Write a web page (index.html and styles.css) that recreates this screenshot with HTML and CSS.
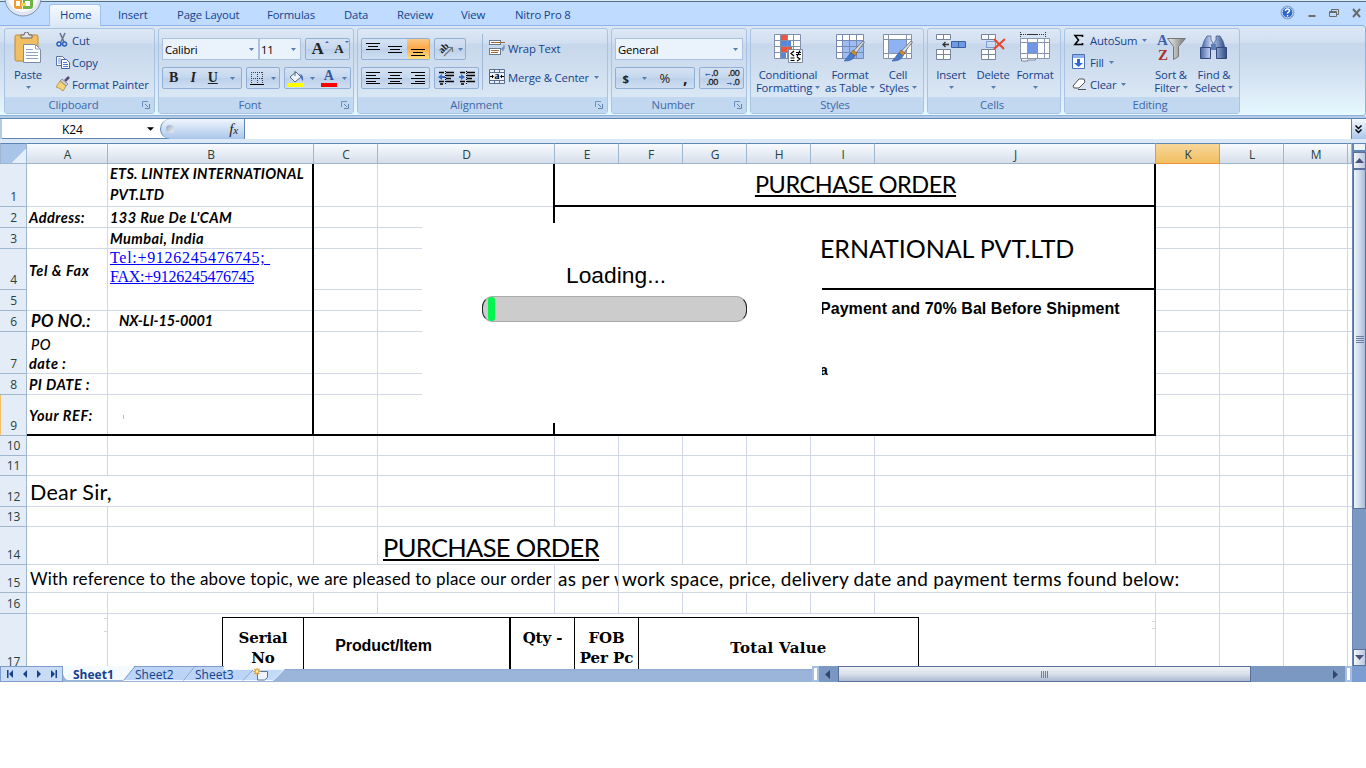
FILE: index.html
```html
<!DOCTYPE html>
<html lang="en">
<head>
<meta charset="utf-8">
<title>Purchase Order</title>
<link rel="stylesheet" href="styles.css">
</head>
<body>
<svg width="0" height="0" class="defs">
  <defs>
    <linearGradient id="gLens" x1="0" y1="0" x2="1" y2="0"><stop offset="0" stop-color="#4a67a5"/><stop offset=".4" stop-color="#c9d9f5"/><stop offset="1" stop-color="#2e4a86"/></linearGradient>
    <linearGradient id="gGrey" x1="0" y1="0" x2="1" y2="0"><stop offset="0" stop-color="#eee"/><stop offset="1" stop-color="#777"/></linearGradient>
    <symbol id="dd" viewBox="0 0 5 3"><path d="M0 0h5L2.500 3z" fill="#567db1"/></symbol>
    <symbol id="launch" viewBox="0 0 8 8"><path d="M.5 6V.5H6" fill="none" stroke="#6f92bd"/><path d="M3 3l3 3M7.500 3v4.500H3" fill="none" stroke="#5f84b3"/></symbol>
    <symbol id="brush" viewBox="0 0 22 22"><path d="M20 1l1.500 1L13 13l-2.500-2z" fill="#ddd" stroke="#666" stroke-width=".8"/><path d="M10 10l4 3-2 3-4-3z" fill="#c98b3c" stroke="#85591f" stroke-width=".6"/><path d="M8 13l4 3c-2 4-6 5-11 5 3-2 4-6 7-8z" fill="#4a7bc8" stroke="#2f5597" stroke-width=".6"/></symbol>
  </defs>
</svg>

<header class="titlebar"></header>
<nav class="tabs">
  <svg class="orb" width="38" height="18" viewBox="0 0 38 18"><circle cx="19" cy="-2" r="18" fill="#dfe6f1" stroke="#7d93b3"/><circle cx="19" cy="-3" r="15" fill="#f7f9fc"/><path d="M10 0h8v9h-5q-3 0-3-3z" fill="#f09a2c"/><path d="M19 0h10v6q0 3-3 3h-7z" fill="#6cb544"/><path d="M12 1h4v5h-4zM21 1h5v5h-5z" fill="#fff"/><path d="M17 3h5v3h-5z" fill="#f7d34c"/></svg>
  <span class="tab tab-active">Home</span>
  <span class="tab tab-insert">Insert</span>
  <span class="tab tab-layout">Page Layout</span>
  <span class="tab tab-formulas">Formulas</span>
  <span class="tab tab-data">Data</span>
  <span class="tab tab-review">Review</span>
  <span class="tab tab-view">View</span>
  <span class="tab tab-nitro">Nitro Pro 8</span>
  <div class="window-icons">
    <svg width="15" height="15" viewBox="0 0 15 15"><circle cx="7.500" cy="7.500" r="6.500" fill="#2e68c8" stroke="#8fa9cf"/><circle cx="7.500" cy="7.500" r="5.400" fill="none" stroke="#dce8fb"/><path d="M5.500 6q0-2 2-2t2 1.800q0 1-1.200 1.500-.8.400-.8 1.500M7.500 10v1.500" fill="none" stroke="#fff" stroke-width="1.500"/></svg>
    <svg width="8" height="15" viewBox="0 0 8 15"><path d="M.5 11h7" stroke="#6b6b6b" stroke-width="2"/></svg>
    <svg width="10" height="15" viewBox="0 0 10 15"><path d="M2.500 6V4.500h7v5H8M.5 6.500h7v5h-7zM.5 7.500h7" fill="none" stroke="#6b6b6b"/></svg>
    <svg width="10" height="15" viewBox="0 0 10 15"><path d="M1 4l7 8M8 4l-7 8" fill="none" stroke="#6b6b6b" stroke-width="2"/></svg>
  </div>
</nav>

<section class="ribbon">
  <div class="group g-clipboard">
    <div class="body">
      <div class="big">
        <svg width="30" height="32" viewBox="0 0 30 32"><rect x="2" y="3" width="23" height="26" rx="1.500" fill="#f1bf62" stroke="#b98a3d"/><path d="M8 6h11V3h-3q0-3-2.500-3T11 3H8z" fill="#e4e4e4" stroke="#666"/><path d="M10.500 12.500h12l5 5v13h-17z" fill="#fff" stroke="#7e8ea8"/><path d="M22.500 12v5h5M13 17.500h7M13 20.500h12M13 23.500h12M13 26.500h12" fill="none" stroke="#8fa1c0"/></svg>
        <span class="lbl">Paste</span><svg class="dd"><use href="#dd"/></svg>
      </div>
      <div class="list">
        <div><svg width="16" height="16" viewBox="0 0 16 16"><path d="M4 1l4 9M9 1L5 10" stroke="#69788f" stroke-width="1.600" fill="none"/><circle cx="3" cy="12" r="2" fill="none" stroke="#2d5fb8" stroke-width="1.500"/><circle cx="8.500" cy="12" r="2" fill="none" stroke="#2d5fb8" stroke-width="1.500"/></svg><span class="lbl">Cut</span></div>
        <div><svg width="16" height="16" viewBox="0 0 16 16"><path d="M.5 2.500h6l3 3v6h-9z" fill="#fff" stroke="#5875a8"/><path d="M2 5h3M2 7h4M2 9h4" stroke="#6a92d8"/><path d="M5.500 5.500h5l3 3v6h-8z" fill="#fff" stroke="#3f62a8"/><path d="M7 8.500h4M7 10.500h5M7 12.500h5" stroke="#4a7bd0"/></svg><span class="lbl">Copy</span></div>
        <div><svg width="16" height="16" viewBox="0 0 16 16"><path d="M13 1l-4 4" stroke="#5a4a78" stroke-width="2.500"/><path d="M6 3l6 5-2 2-6-5z" fill="#c9cdd8" stroke="#777" stroke-width=".7"/><path d="M4 5l6 5-3 5q-3-3-7-4z" fill="#f3d27a" stroke="#a6802f" stroke-width=".7"/></svg><span class="lbl">Format Painter</span></div>
      </div>
    </div>
    <div class="caption"><span>Clipboard</span><svg width="8" height="8"><use href="#launch"/></svg></div>
  </div>

  <div class="group g-font">
    <div class="body rows">
      <div class="row">
        <div class="combo c-font"><span>Calibri</span><svg class="dd"><use href="#dd"/></svg></div><div class="combo c-size"><span>11</span><svg class="dd"><use href="#dd"/></svg></div>
        <div class="btns b-grow"><b class="serif s18">A<i class="up"></i></b><b class="serif s14">A<i class="down"></i></b></div>
      </div>
      <div class="row">
        <div class="btns b-biu"><b class="serif">B</b><b class="serif it">I</b><b class="serif un">U</b><svg class="dd"><use href="#dd"/></svg></div>
        <div class="btns b-border"><svg width="15" height="15" viewBox="0 0 15 15"><path d="M1 1.500h12M1 7.500h12M1.500 1v12M7.500 1v12M12.500 1v12" stroke="#444" stroke-dasharray="1 1" fill="none"/><path d="M0 13.500h14" stroke="#000"/></svg><svg class="dd"><use href="#dd"/></svg></div>
        <div class="btns b-fill"><svg width="17" height="17" viewBox="0 0 17 17"><path d="M2 7l6-5 5 5-6 5z" fill="#eef3fb" stroke="#54688c"/><path d="M7 1v5" stroke="#54688c"/><path d="M11 4q5 0 4 7-2-1-2-5z" fill="#3f6fc0"/><path d="M0 13h16v4H0z" fill="#ff0"/></svg><svg class="dd"><use href="#dd"/></svg><b class="serif fcol">A</b><svg class="dd"><use href="#dd"/></svg></div>
      </div>
    </div>
    <div class="caption"><span>Font</span><svg width="8" height="8"><use href="#launch"/></svg></div>
  </div>

  <div class="group g-align">
    <div class="body">
      <div class="rows align-left">
        <div class="row">
          <div class="btns b-three"><span><svg width="14" height="14"><path d="M0 1.500h14M2 4.500h10M0 7.500h14" stroke="#000"/></svg></span><span><svg width="14" height="14"><path d="M0 4.500h14M2 7.500h10M0 10.500h14" stroke="#000"/></svg></span><span class="hot"><svg width="14" height="14"><path d="M0 7.500h14M2 10.500h10M0 13.500h14" stroke="#000"/></svg></span></div>
          <div class="btns b-orient"><svg width="17" height="17" viewBox="0 0 17 17"><path d="M7 15l8-8M11 6.500h4.500V11" stroke="#777" stroke-width="1.200" fill="none"/><text x="0" y="0" transform="translate(5 13) rotate(-45)" class="ab">ab</text></svg><svg class="dd"><use href="#dd"/></svg></div>
        </div>
        <div class="row">
          <div class="btns b-three"><span><svg width="14" height="12"><path d="M0 .5h14M0 3.500h10M0 6.500h14M0 9.500h10M0 11.500h14" stroke="#000"/></svg></span><span><svg width="14" height="12"><path d="M0 .5h14M2 3.500h10M0 6.500h14M2 9.500h10M0 11.500h14" stroke="#000"/></svg></span><span><svg width="14" height="12"><path d="M0 .5h14M4 3.500h10M0 6.500h14M4 9.500h10M0 11.500h14" stroke="#000"/></svg></span></div>
          <div class="btns b-indent"><span><svg width="16" height="14"><path d="M1 1.500h5M8 1.500h8M8 4.500h8M8 7.500h5M1 10.500h5M8 10.500h8M2 13h3" stroke="#000" stroke-width="1.500"/><path d="M0 6l4-3v2h3v2H4v2z" fill="#3c6cc4"/><path d="M7.500 0v14" stroke="#000" stroke-dasharray="1 1"/></svg></span><span><svg width="16" height="14"><path d="M1 1.500h5M8 1.500h8M8 4.500h8M8 7.500h5M1 10.500h5M8 10.500h8M2 13h3" stroke="#000" stroke-width="1.500"/><path d="M6 6L2 3v2H0v2h2v2z" fill="#3c6cc4"/><path d="M7.500 0v14" stroke="#000" stroke-dasharray="1 1"/></svg></span></div>
        </div>
      </div>
      <div class="rows align-right">
        <div class="row"><svg width="16" height="16" viewBox="0 0 16 16"><rect x=".5" y=".5" width="11" height="4" fill="#fff" stroke="#6a7a92"/><path d="M2 2.500h14" stroke="#a86a32"/><rect x=".5" y="8.500" width="11" height="6" fill="#fff" stroke="#6a7a92"/><path d="M2 10.500h8M2 12.500h7" stroke="#a86a32"/><path d="M15 5v4h-2M14.500 7l-2 2 2 2" stroke="#567db1" fill="none"/></svg><span class="lbl">Wrap Text</span></div>
        <div class="row"><svg width="16" height="16" viewBox="0 0 16 16"><path d="M.5 .5h15v14H.5zM.5 3.500h15M.5 11.500h15M5.500 .5v3M10.500 .5v3M5.500 11.500v3M10.500 11.500v3" fill="#eef2f8" stroke="#5b6f92"/><text x="5.500" y="10" class="mono-a">a</text><path d="M1 7.500h3M12 7.500h3M3 6l1.500 1.500L3 9M13 6l-1.500 1.500L13 9" stroke="#000" fill="none"/></svg><span class="lbl merge">Merge &amp; Center</span><svg class="dd"><use href="#dd"/></svg></div>
      </div>
    </div>
    <div class="caption"><span>Alignment</span><svg width="8" height="8"><use href="#launch"/></svg></div>
  </div>

  <div class="group g-number">
    <div class="body rows">
      <div class="row"><div class="combo c-general"><span>General</span><svg class="dd"><use href="#dd"/></svg></div></div>
      <div class="row">
        <div class="btns b-money"><b>$</b><svg class="dd"><use href="#dd"/></svg><b class="pct">%</b><b class="comma">,</b></div>
        <div class="btns b-dec"><span class="dec"><em>←</em>.0<br>.00</span><span class="dec">.00<br><em>→</em>.0</span></div>
      </div>
    </div>
    <div class="caption"><span>Number</span><svg width="8" height="8"><use href="#launch"/></svg></div>
  </div>

  <div class="group g-styles">
    <div class="body">
      <div class="big w-cond"><svg width="32" height="32" viewBox="0 0 32 32"><path d="M2 2h26v25H2z" fill="#fff"/><path d="M8 2h7v6H8zM8 14h12v6H8z" fill="#ea5440"/><path d="M8 8h11v6H8zM8 20h6v7H8z" fill="#5886dc"/><path d="M2.500 2.500h26v24h-26zM2 8.500h26M2 14.500h26M2 20.500h26M8.500 2v25M15.500 2v25M21.500 2v25" fill="none" stroke="#8390ac"/><path d="M16.500 17.500h14v13h-14z" fill="#fff" stroke="#7c8aa0"/><path d="M22 19l-3 2.500 3 2.500M18.500 26h4M18.500 28.500h4M24 20.500h5M24 22.500h5M28 18.500l-3 6M25 25l3 2-3 2" fill="none" stroke="#000" stroke-width="1.200"/></svg><span class="lbl">Conditional<br>Formatting <svg class="dd"><use href="#dd"/></svg></span></div>
      <div class="big w-table"><svg width="32" height="32" viewBox="0 0 32 32"><path d="M2 2h27v25H2z" fill="#fff"/><path d="M9 8h20v19H9z" fill="#9dbcf3"/><path d="M2.500 2.500h27v24h-27zM2 8.500h27M2 14.500h27M2 20.500h27M8.500 2v25M15.500 2v25M22.500 2v25" fill="none" stroke="#7789b0"/><use href="#brush" x="9" y="8" width="22" height="22"/></svg><span class="lbl">Format<br>as Table <svg class="dd"><use href="#dd"/></svg></span></div>
      <div class="big w-cell"><svg width="32" height="32" viewBox="0 0 32 32"><path d="M1.500 2.500h28v24h-28zM1 7.500h28M1 21.500h28M6.500 2v25M24.500 2v25" fill="#fff" stroke="#8391ad"/><path d="M7 8h17v13H7z" fill="#8fb2f4"/><use href="#brush" x="9" y="8" width="22" height="22"/></svg><span class="lbl">Cell<br>Styles <svg class="dd"><use href="#dd"/></svg></span></div>
    </div>
    <div class="caption"><span>Styles</span></div>
  </div>

  <div class="group g-cells">
    <div class="body">
      <div class="big"><svg width="32" height="32" viewBox="0 0 32 32"><path d="M1.500 2.500h14v5h-14zM8.500 2v5M1.500 17.500h14v10h-14zM8.500 17v11M1 22.500h15" fill="#fff" stroke="#77859d"/><path d="M16.500 9.500h14v6h-14zM23.500 9v7" fill="#6f9ae8" stroke="#3e5f9e"/><path d="M14 12.500H8M10.500 10L8 12.500l2.500 2.500" stroke="#333" fill="none" stroke-width="1.300"/></svg><span class="lbl">Insert</span><svg class="dd"><use href="#dd"/></svg></div>
      <div class="big"><svg width="32" height="32" viewBox="0 0 32 32"><path d="M4.500 2.500h14v5h-14zM11.500 2v5M4.500 17.500h14v10h-14zM11.500 17v11M4 22.500h15" fill="#fff" stroke="#77859d"/><path d="M9.500 9.500h9v6h-9z" fill="none" stroke="#2d5fc0" stroke-dasharray="1 1"/><path d="M17 7l10 10M28 7L17 17" stroke="#e8432d" stroke-width="2"/></svg><span class="lbl">Delete</span><svg class="dd"><use href="#dd"/></svg></div>
      <div class="big"><svg width="32" height="32" viewBox="0 0 32 32"><path d="M2 2.500h24M1.500 0v5M26.500 0v5" stroke="#333" stroke-dasharray="1 1"/><path d="M8 2.500h11" stroke="#333"/><path d="M1.500 6.500h29v20h-29zM1 10.500h29M1 21.500h29M8.500 6v20M18.500 6v20M25.500 6v20" fill="#fff" stroke="#8996b0"/><path d="M9 11h9v10H9z" fill="#6f98e6"/><path d="M2.500 27v2h6v-1h8v-1" fill="#fff" stroke="#77859d"/></svg><span class="lbl">Format</span><svg class="dd"><use href="#dd"/></svg></div>
    </div>
    <div class="caption"><span>Cells</span></div>
  </div>

  <div class="group g-edit">
    <div class="body">
      <div class="list">
        <div><svg width="14" height="16" viewBox="0 0 14 16"><path d="M10.500 5V3.500H3L6.500 8 3 12.500h7.500V11" stroke="#000" stroke-width="1.600" fill="none"/></svg><span class="lbl">AutoSum</span><svg class="dd"><use href="#dd"/></svg></div>
        <div><svg width="14" height="16" viewBox="0 0 14 16"><path d="M.5 .5h12v14H.5z" fill="#fff" stroke="#4a71b8"/><path d="M1 1h11v3H1z" fill="#8fb2ec"/><path d="M5 5h3v4h3l-4.500 4L2 9h3z" fill="#2f6ad0"/></svg><span class="lbl">Fill</span><svg class="dd"><use href="#dd"/></svg></div>
        <div><svg width="14" height="16" viewBox="0 0 14 16"><path d="M1 10l6-7h5l1 3-6 6H2z" fill="#fff" stroke="#555"/><path d="M7 12l5-5M6 13.500h8" stroke="#555"/></svg><span class="lbl">Clear</span><svg class="dd"><use href="#dd"/></svg></div>
      </div>
      <div class="big w-sort"><svg width="32" height="32" viewBox="0 0 32 32"><text x="2" y="13" class="az az-a">A</text><text x="3" y="28" class="az az-z">Z</text><path d="M12.500 6.500h18l-7 8v10l-5 3v-13z" fill="url(#gGrey)" stroke="#777"/></svg><span class="lbl">Sort &amp;<br>Filter <svg class="dd"><use href="#dd"/></svg></span></div>
      <div class="big w-find"><svg width="32" height="32" viewBox="0 0 32 32"><path d="M9 4h4v4l2 3v5H4l2-7zM18 4h4l3 5 2 7H16v-5l2-3z" fill="url(#gLens)" stroke="#3c5488" stroke-width=".7"/><path d="M2.500 15.500h10v11h-10zM18.500 15.500h10v11h-10z" fill="url(#gLens)" stroke="#33497c"/><path d="M13 12h5v6h-5z" fill="#5f7db8"/></svg><span class="lbl">Find &amp;<br>Select <svg class="dd"><use href="#dd"/></svg></span></div>
    </div>
    <div class="caption"><span>Editing</span></div>
  </div>
</section>

<section class="formula">
  <div class="namebox"><span>K24</span><svg width="7" height="4" viewBox="0 0 8 4"><path d="M0 0h8L4 4z"/></svg></div>
  <div class="fx"><i class="knob"></i><span>f<small>x</small></span></div>
  <div class="finput"></div>
  <div class="fexpand"><svg width="8" height="9" viewBox="0 0 8 9"><path d="M.5 .5l3 3 3-3M.5 4.500l3 3 3-3" fill="none" stroke="#000" stroke-width="1.500"/></svg></div>
</section>

<main class="work">
  <div class="sheet">
    <div class="corner"></div>
    <div class="ch">A</div><div class="ch">B</div><div class="ch">C</div><div class="ch">D</div><div class="ch">E</div><div class="ch">F</div><div class="ch">G</div><div class="ch">H</div><div class="ch">I</div><div class="ch">J</div><div class="ch sel">K</div><div class="ch">L</div><div class="ch">M</div><div class="ch end"></div>
    <div class="rh">1</div><div class="rh">2</div><div class="rh">3</div><div class="rh">4</div><div class="rh">5</div><div class="rh">6</div><div class="rh">7</div><div class="rh">8</div><div class="rh current">9</div><div class="rh">10</div><div class="rh">11</div><div class="rh">12</div><div class="rh">13</div><div class="rh">14</div><div class="rh">15</div><div class="rh">16</div><div class="rh last">17</div>
    <div class="hl r1"></div><div class="hl r2"></div><div class="hl r3"></div><div class="hl r4"></div><div class="hl r5"></div><div class="hl r6"></div><div class="hl r7"></div><div class="hl r8"></div><div class="hl r9"></div><div class="hl r10"></div><div class="hl r11"></div><div class="hl r12"></div><div class="hl r13"></div><div class="hl r14"></div><div class="hl r15"></div><div class="hl r16"></div>
    <div class="vl c2"></div><div class="vl c3"></div><div class="vl c4"></div><div class="vl c5"></div><div class="vl c6"></div><div class="vl c7"></div><div class="vl c8"></div><div class="vl c9"></div><div class="vl c10"></div><div class="vl c11"></div><div class="vl c12"></div><div class="vl c13"></div><div class="vl c14"></div>

    <div class="cell bi b1">ETS. LINTEX INTERNATIONAL<br>PVT.LTD</div>
    <div class="cell bi a2">Address:</div>
    <div class="cell bi b2">133 Rue De L'CAM</div>
    <div class="cell bi b3">Mumbai, India</div>
    <div class="cell bi a4">Tel &amp; Fax</div>
    <div class="cell b4"><u class="tel">Tel:+9126245476745;&nbsp;</u><br><u class="fax">FAX:+9126245476745</u></div>
    <div class="cell bi a6">PO NO.:</div>
    <div class="cell bi b6">NX-LI-15-0001</div>
    <div class="cell bi a7"><span class="med">PO</span><br>date :</div>
    <div class="cell bi a8">PI DATE :</div>
    <div class="cell bi a9">Your REF:</div>
    <i class="speck"></i>
    <div class="frame-left"></div>
    <div class="frame-all"></div>
    <div class="cell po-title"><u>PURCHASE ORDER</u></div>
    <div class="cell company">ERNATIONAL PVT.LTD</div>
    <div class="cell terms"><p>Payment and 70% Bal Before Shipment</p><p class="frag">a</p></div>
    <div class="cell dear">Dear Sir,</div>
    <div class="cell po2"><u>PURCHASE ORDER</u></div>
    <div class="cell t15 t15a">With reference to the above topic, we are pleased to place our order</div>
    <div class="cell t15 t15b">as per w</div>
    <div class="cell t15 t15c">work space, price, delivery date and payment terms found below:</div>
    <div class="cell items">
      <div class="th">Serial<br>No</div><div class="th sans">Product/Item</div><div class="th">Qty -</div><div class="th">FOB<br>Per Pc</div><div class="th total">Total Value</div>
    </div>
    <i class="tick tick-a"></i><i class="tick tick-j"></i>
    <div class="loading"><p>Loading...</p><div class="bar"><i></i></div></div>
  </div>
  <aside class="vscroll">
    <div class="vsplit"></div>
    <div class="vbtn"><svg width="9" height="5"><path d="M0 5h9L4.500 0z" fill="#46527a"/></svg></div>
    <div class="vthumb"><i></i></div>
    <div class="vtrack"></div>
    <div class="vbtn"><svg width="9" height="5"><path d="M0 0h9L4.500 5z" fill="#46527a"/></svg></div>
    <div class="vcorner"></div>
  </aside>
</main>

<footer class="bottom">
  <div class="navs"><svg width="62" height="14" viewBox="0 0 62 14" fill="#15428b"><path d="M6 3h1.500v8H6zM12 3v8L8 7zM26 3v8l-4-4zM36 3v8l4-4zM50 3v8l4-4zM54.500 3H56v8h-1.500z"/></svg></div>
  <div class="sheettabs">
    <svg width="222" height="16" viewBox="0 0 222 16"><path d="M190 3.500h31l-11 11h-31z" fill="#c3daf8" stroke="#f4f9ff"/><path d="M131 .5h30v3h30l-11 11h-60z" fill="#bcd5f7" stroke="#f4f9ff"/><path d="M71 .5h61l-11 14H60z" fill="#bcd5f7" stroke="#f4f9ff"/><path d="M71 .5h90M60.500 14.500l11-13.500M120.500 14.500l11-13.500M180 14.500L190 4" fill="none" stroke="#7c9bc9"/><path d="M0 0h71L60 14H5Q2 14 0 8z" fill="#f5faff"/><path d="M194.500 5.500h10v6l-3 2.500h-7z" fill="#eef4fd" stroke="#5c7298"/><path d="M194 2v7M190.500 5.500h7M191.500 3l5 5M196.500 3l-5 5" stroke="#e69a1d" stroke-width="1.200"/><circle cx="194" cy="5.500" r="1.300" fill="#fff6c8"/></svg>
    <span class="st s1">Sheet1</span><span class="st s2">Sheet2</span><span class="st s3">Sheet3</span>
  </div>
  <div class="gap"></div>
  <div class="hscroll"><i class="hsplit"></i><i class="hleft"><svg width="5" height="9"><path d="M5 0v9L0 4.500z" fill="#34456d"/></svg></i><i class="hthumb"><b></b></i><i class="hright"><svg width="5" height="9"><path d="M0 0v9l5-4.500z" fill="#34456d"/></svg></i><i class="hsplit"></i></div>
  <div class="hcorner"></div>
</footer>
</body>
</html>
```
FILE: styles.css
```css
* { box-sizing: border-box; }
html, body { margin: 0; background: #fff; }
body { width: 1366px; height: 768px; overflow: hidden; font-family: "Open Sans", "Noto Sans", sans-serif; font-size: 11.3px; letter-spacing: -.15px; color: #15428b; }
svg { display: block; flex: none; }
.defs { position: absolute; }
p { margin: 0; }
.titlebar { height: 2px; background: #dbe8f6; border-bottom: 1px solid #56707f; }

/* tab strip */
.tabs { height: 23px; display: flex; background: #bfdbff; position: relative; }
.orb { margin: -2px 0 0 4px; width: 38px; }
.tab { height: 24px; line-height: 26px; white-space: nowrap; }
.tab-active { margin: 2px 0 0 7px; padding-left: 10px; width: 52px; height: 22px; line-height: 20px; border: 1px solid #9fc0e8; border-bottom: 0; border-radius: 3px 3px 0 0; background: linear-gradient(#f4f9ff, #dbe8f8); z-index: 1; }
.tab-insert { padding-left: 17px; width: 76px; }
.tab-layout { width: 90px; }
.tab-formulas { width: 77px; }
.tab-data { width: 53px; }
.tab-review { width: 64px; }
.tab-view { width: 54px; }
.window-icons { margin-left: auto; display: flex; align-items: center; gap: 13px; padding-right: 4px; height: 21px; }

/* ribbon */
.ribbon { height: 91px; display: flex; gap: 3px; padding: 2px 0 0 4px; border: 1px solid #8db2e3; border-left-width: 0; border-bottom-color: #8fb0d8; border-radius: 0 3px 3px 0; background: linear-gradient(#dbe7f5 0, #d3e0f1 16px, #c8d8ec 17px, #c9d9ed 30px, #dfedf9 72px, #e5f9ff 88px); }
.group { height: 86px; border: 1px solid #a8c4e2; border-radius: 3px; display: flex; flex-direction: column; background: linear-gradient(#dde8f5 0, #d2dff0 14px, #c7d7eb 15px, #dae7f4 70px); }
.g-clipboard { width: 151px; }
.g-font { width: 196px; }
.g-align { width: 251px; }
.g-number { width: 136px; }
.g-styles { width: 174px; }
.g-cells { width: 134px; }
.g-edit { width: 176px; }
.body { height: 68px; display: flex; }
.caption { height: 16px; line-height: 16px; background: #c1d8f0; color: #3f68a9; display: flex; align-items: center; padding-right: 4px; }
.caption span { flex: 1; text-align: center; }
.lbl { white-space: nowrap; }
.dd { width: 5px; height: 3px; }
.big { display: flex; flex-direction: column; align-items: center; padding-top: 3px; line-height: 13px; text-align: center; width: 44px; }
.big .lbl { margin-top: 4px; }
.big > .dd { margin-top: 5px; }
.lbl .dd { display: inline-block; vertical-align: 3px; }
.g-clipboard .big { width: 46px; }
.g-clipboard .list { margin-left: 5px; }
.list > div { display: flex; align-items: center; height: 22px; }
.list .dd { margin-left: 5px; }
.rows { display: flex; flex-direction: column; padding: 9px 0 0 3px; gap: 7px; }
.row { display: flex; height: 22px; align-items: center; gap: 4px; }
.combo { height: 22px; border: 1px solid #abc1de; background: #eaf2fb; color: #000; display: flex; align-items: center; justify-content: space-between; padding: 0 4px 0 2px; }
.c-font { width: 97px; }
.c-size { width: 42px; margin-left: -4px; padding-left: 1px; }
.c-general { width: 128px; }
.btns { height: 22px; border: 1px solid #8fafd6; border-radius: 2px; background: linear-gradient(#d5e2f3, #c5d7ee 50%, #bcd0ea 51%, #cfdff2); display: flex; align-items: center; justify-content: space-around; color: #222; }
.serif { font-family: "Liberation Serif", serif; font-size: 14px; line-height: 16px; position: relative; }
.s18 { font-size: 17px; }
.s14 { font-size: 13px; }
.up, .down { position: absolute; right: -5px; top: 0; border: 2.5px solid transparent; }
.up { border-bottom-color: #3f68a9; top: -2px; }
.down { border-top-color: #3f68a9; }
.it { font-style: italic; }
.un { text-decoration: underline; }
.fcol { color: #35589c; border-bottom: 4px solid #f00; height: 18px; line-height: 13px; width: 16px; text-align: center; }
.b-grow { width: 45px; }
.b-biu { width: 80px; }
.b-border { width: 34px; }
.b-fill { width: 67px; }
.b-three { width: 69px; }
.b-three span { flex: 1; height: 20px; display: flex; align-items: center; justify-content: center; }
.b-three .hot { background: linear-gradient(#fbc983, #fba948 45%, #fddf7c); }
.b-orient { width: 32px; }
.b-indent { width: 45px; }
.ab { font: bold 10px "Liberation Serif"; fill: #222; }
.mono-a { font: bold 10px "Liberation Serif"; fill: #000; }
.align-left { width: 124px; }
.align-right { border-left: 1px solid #9db8d9; margin-top: 5px; height: 56px; padding: 3px 0 0 6px; }
.align-right .row { gap: 3px; }
.align-right .dd { margin-left: 2px; }
.b-money { width: 80px; }
.pct { font-weight: 400; font-size: 13px; }
.comma { font-size: 16px; line-height: 12px; }
.b-dec { width: 45px; }
.dec { font: 9px/9px "Liberation Sans"; text-align: right; letter-spacing: -.3px; -webkit-text-stroke: .3px; }
.dec em { font-style: normal; color: #2d5fc0; font-size: 8px; }
.w-cond { width: 74px; }
.w-table { width: 50px; }
.w-cell { width: 46px; }
.g-cells .big { width: 42px; }
.g-cells .body { padding-left: 2px; }
.g-edit .list { width: 84px; padding-left: 7px; }
.g-edit .list .lbl { margin-left: 4px; }
.w-sort { width: 44px; }
.w-find { width: 42px; }
.az { font: bold 15px "Liberation Serif"; }
.az-a { fill: #3c62ad; }
.az-z { fill: #a8322c; }

/* formula bar */
.formula { height: 27px; display: flex; padding: 3px 0 4px; background: linear-gradient(#b3cbe8 0, #b3cbe8 2px, #5f86b2 2px, #5f86b2 3px, #fff 3px, #fff 22px, #5f86b2 22px, #5f86b2 23px, #dbe8f6 23px); color: #000; font-size: 12px; }
.namebox { width: 160px; display: flex; align-items: center; padding-left: 60px; border-left: 2px solid #b3cbe8; margin-right: 0; }
.namebox span { width: 20px; }
.namebox svg { margin-left: 65px; }
.fx { width: 85px; border-radius: 10px 0 0 10px; border: 1px solid #5f86b2; border-width: 0 1px; background: linear-gradient(#f0f6fd, #a9c6ea); display: flex; align-items: center; justify-content: space-between; padding: 0 6px 0 5px; }
.knob { width: 8px; height: 8px; border-radius: 4px; background: linear-gradient(135deg, #94a3bb, #f3f6fa); }
.fx span { font: italic 15px/18px "Liberation Serif"; color: #222; }
.fx small { font-size: 11px; }
.finput { flex: 1; background: #fff; }
.fexpand { width: 15px; background: linear-gradient(#f3f8fe, #a9c6ea); border-left: 1px solid #5f86b2; display: flex; align-items: center; justify-content: center; }

/* worksheet */
.work { display: flex; height: 526px; }
.sheet { width: 1352px; position: relative; display: grid; grid-template-columns: 27px 81px 206px 64px 177px 64px 64px 64px 64px 64px 281px 64px 64px 64px 4px; grid-template-rows: 21px 43px 21px 21px 41px 21px 21px 42px 21px 41px 20px 20px 31px 20px 38px 28px 21px 55px; overflow: hidden; }
.corner { background: linear-gradient(135deg, #a9c4e9 66%, #e4eefa 66%); border: 1px solid #9eb6ce; border-top-color: #5f86b2; }
.ch { border-top: 1px solid #5f86b2; border-bottom: 1px solid #9eb6ce; border-right: 1px solid #9eb6ce; background: linear-gradient(#f8fbfe, #d6deea); font-size: 12px; line-height: 21px; text-align: center; color: #27413e; padding-left: 1px; }
.sel { background: linear-gradient(#f8d79c, #f1bf5f); border-right-color: #ef923c; border-bottom-color: #ef923c; box-shadow: -1px 0 #ef923c; }
.rh { grid-column: 1; background: #e4ecf7; border-right: 1px solid #9eb6ce; border-bottom: 1px solid #9eb6ce; display: flex; align-items: flex-end; justify-content: center; font-size: 12px; line-height: 17px; color: #27413e; padding: 0 0 1px 1px; }
.last { padding-bottom: 0; line-height: 12px; }
.current { box-shadow: inset 1px 0 #f5bf66; }
.hl { grid-column: 2 / -1; border-bottom: 1px solid #d0d7e5; }
.vl { grid-row: 2 / -1; border-right: 1px solid #d0d7e5; }
.r1 { grid-row: 2; } .r2 { grid-row: 3; } .r3 { grid-row: 4; } .r4 { grid-row: 5; } .r5 { grid-row: 6; } .r6 { grid-row: 7; } .r7 { grid-row: 8; } .r8 { grid-row: 9; } .r9 { grid-row: 10; } .r10 { grid-row: 11; } .r11 { grid-row: 12; } .r12 { grid-row: 13; } .r13 { grid-row: 14; } .r14 { grid-row: 15; } .r15 { grid-row: 16; } .r16 { grid-row: 17; }
.c2 { grid-column: 2; } .c3 { grid-column: 3; } .c4 { grid-column: 4; } .c5 { grid-column: 5; } .c6 { grid-column: 6; } .c7 { grid-column: 7; } .c8 { grid-column: 8; } .c9 { grid-column: 9; } .c10 { grid-column: 10; } .c11 { grid-column: 11; } .c12 { grid-column: 12; } .c13 { grid-column: 13; } .c14 { grid-column: 14; }
.cell { color: #000; white-space: nowrap; font-family: Lato, sans-serif; z-index: 1; letter-spacing: 0; }
.bi { font-weight: 700; font-style: italic; font-size: 14.5px; line-height: 21px; padding-left: 2px; letter-spacing: .45px; margin-top: -1px; }
.b1 { grid-area: 2 / 3; letter-spacing: .26px; }
.a2 { grid-area: 3 / 2; margin-top: 0; }
.b2 { grid-area: 3 / 3; margin-top: 0; }
.b3 { grid-area: 4 / 3; margin-top: 0; }
.a4 { grid-area: 5 / 2 / 7 / 3; background: #fff; margin: 0 1px 1px 0; padding-top: 11px; letter-spacing: .65px; }
.b4 { grid-area: 5 / 3 / 7 / 4; background: #fff; margin: 0 1px 1px 0; font: 16px/19px "Liberation Serif", serif; color: #00f; padding-left: 2px; }
.tel { letter-spacing: .7px; }
.fax { letter-spacing: -.24px; }
.b4 u { position: relative; top: -1px; }
.a6 { grid-area: 7 / 2; font-size: 16.5px; padding-left: 4px; letter-spacing: .3px; margin-top: 0; }
.b6 { grid-area: 7 / 3; padding-left: 11px; letter-spacing: -.13px; }
.a7 { grid-area: 8 / 2; line-height: 19px; padding-top: 4px; }
.med { font-weight: 500; padding-left: 2px; }
.a8 { grid-area: 9 / 2; margin-top: 0; }
.a9 { grid-area: 10 / 2; padding-top: 11px; letter-spacing: .6px; }
.speck { grid-area: 10 / 3; width: 1px; height: 4px; margin: 20px 0 0 15px; background: #e3b98a; }
.frame-left { grid-area: 2 / 2 / 11 / 4; border-right: 2px solid #000; z-index: 2; }
.frame-all { grid-area: 2 / 2 / 11 / 12; border: solid #000; border-width: 0 2px 2px 0; z-index: 2; }
.po-title { grid-area: 2 / 6 / 3 / 12; background: #fff; border-left: 2px solid #000; border-bottom: 2px solid #000; margin-left: -2px; text-align: center; font-size: 23.5px; letter-spacing: -.46px; line-height: 41px; }
.company { grid-area: 3 / 6 / 6 / 12; background: #fff; border-left: 2px solid #000; border-bottom: 2px solid #000; margin-left: -2px; padding-left: 265px; font-size: 25px; letter-spacing: -.07px; line-height: 82px; }
.terms { grid-area: 6 / 6 / 11 / 12; background: #fff; border-left: 2px solid #000; margin-left: -2px; padding: 9px 0 0 265px; font: bold 16px/20px "Liberation Sans", sans-serif; letter-spacing: .05px; }
.frag { margin-top: 41px; font-size: 14px; }
.dear { grid-area: 13 / 2 / 14 / 4; background: #fff; margin: 0 1px 1px 0; padding-left: 3px; font-size: 21.5px; letter-spacing: .25px; line-height: 32px; }
.po2 { grid-area: 15 / 5 / 16 / 7; background: #fff; margin: 0 1px 1px 0; padding-left: 5px; font-size: 25.5px; letter-spacing: -.66px; line-height: 41px; }
.t15 { background: #fff; margin: 0 1px 1px 0; padding-left: 3px; line-height: 27px; overflow: hidden; }
.t15a { grid-area: 16 / 2 / 17 / 6; font-size: 17px; letter-spacing: .2px; }
.t15b { grid-area: 16 / 6; font-size: 19px; letter-spacing: .27px; }
.t15c { grid-area: 16 / 7 / 17 / 13; font-size: 19px; letter-spacing: .27px; }
.items { grid-area: 18 / 3 / 19 / 12; background: #fff; margin-right: 1px; padding: 3px 0 0 114px; display: grid; grid-template-columns: 82px 207px 64px 64px 280px; }
.th { border-top: 1px solid #000; border-right: 1px solid #000; text-align: center; font: bold 15px/20px "DejaVu Serif", serif; letter-spacing: -.1px; padding-top: 10px; }
.th:first-child { border-left: 1px solid #000; }
.th.sans { font: bold 16px/20px "Liberation Sans", sans-serif; padding: 18px 46px 0 0; border-right-width: 2px; }
.th.total { padding-top: 20px; letter-spacing: .3px; }
.tick { z-index: 2; width: 4px; border: solid #d0d7e5; border-width: 1px 0; justify-self: end; }
.tick-a { grid-area: 18 / 2; height: 14px; margin-top: 4px; }
.tick-j { grid-area: 18 / 11; height: 8px; margin-top: 7px; }
.loading { position: absolute; left: 422px; top: 80px; width: 400px; height: 200px; background: #fff; z-index: 5; color: #000; font: 22.8px/26px "Liberation Sans", sans-serif; letter-spacing: 0; padding: 39px 75px 0 60px; }
.loading p { padding-left: 84px; }
.bar { margin-top: 8px; height: 26px; width: 265px; border-radius: 11px; background: #ccc; border: 1px solid #aaa; border-left-color: #222; border-right-color: #222; }
.bar i { display: block; width: 7px; height: 24px; margin-left: 5px; border-radius: 3px; background: #00f64c; }

/* vertical scroll bar */
.vscroll { width: 14px; display: flex; flex-direction: column; background: #7a98c2; border-left: 1px solid #6b87b3; }
.vsplit { height: 9px; background: #eef4fc; border: solid #5f86b2; border-width: 1px 1px 2px; }
.vbtn { height: 17px; background: linear-gradient(90deg, #f4f6fa, #b9c8df); border: 1px solid #5a6f9c; display: flex; align-items: center; justify-content: center; }
.vthumb { height: 340px; background: linear-gradient(90deg, #eef2f8, #d3deed 45%, #a9bdd8); border: 1px solid #5a6f9c; display: flex; align-items: center; justify-content: center; }
.vthumb i { width: 8px; height: 7px; background: repeating-linear-gradient(#6d7fa3 0 1px, transparent 1px 2px); }
.vtrack { flex: 1; }
.vcorner { height: 3px; background: #7b9dd0; }

/* sheet tabs and horizontal scroll bar */
.bottom { height: 16px; margin-top: -3px; display: flex; position: relative; z-index: 6; width: 1366px; }
.navs { width: 63px; border: 1px solid #7c9bc9; background: #c8dcf6; }
.sheettabs { width: 222px; position: relative; background: linear-gradient(transparent 3px, #9bb4da 3px); }
.st { position: absolute; top: 1px; line-height: 15px; font-size: 12px; letter-spacing: 0; }
.s1 { left: 10px; font-weight: 700; }
.s2 { left: 72px; }
.s3 { left: 132px; }
.gap { flex: 1; margin-top: 3px; background: linear-gradient(#8fa9d0, #9bb4da 2px); }
.hscroll { width: 540px; display: flex; background: #7a98c2; }
.hsplit { width: 7px; background: #fff; border: 2px solid #a5bfe2; }
.hleft { width: 19px; padding: 4px 0 0 6px; }
.hthumb { width: 413px; background: linear-gradient(#f0f2f6, #d9e0ea 50%, #a9bad3); border: 1px solid #5a6f9c; display: flex; align-items: center; justify-content: center; }
.hthumb b { width: 7px; height: 7px; background: repeating-linear-gradient(90deg, #6d7fa3 0 1px, transparent 1px 2px); }
.hright { flex: 1; display: flex; align-items: center; justify-content: flex-end; padding-right: 7px; }
.hcorner { width: 14px; background: #7b9dd0; }
```
